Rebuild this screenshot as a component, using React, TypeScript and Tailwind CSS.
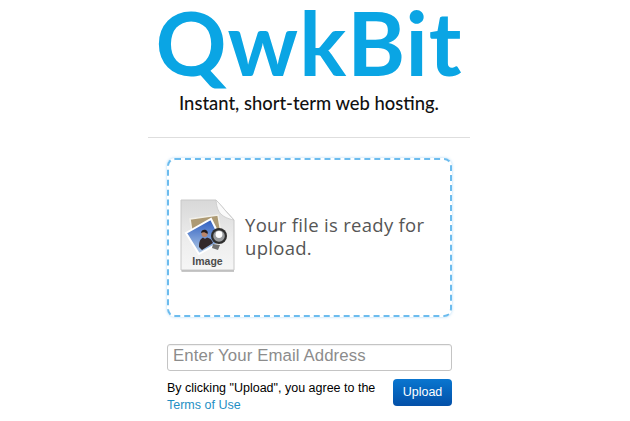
import React from "react";

// Finder-style image document icon
function ImageDocIcon() {
  return (
    <svg width="58" height="76" viewBox="0 0 58 76" className="block -mt-[3px]">
      <defs>
        <linearGradient id="page" x1="0" y1="0" x2="0" y2="1">
          <stop offset="0" stopColor="#d8d8d8" />
          <stop offset="0.6" stopColor="#eeeeee" />
          <stop offset="1" stopColor="#f6f6f6" />
        </linearGradient>
        <linearGradient id="sky" x1="0" y1="0" x2="0" y2="1">
          <stop offset="0" stopColor="#2c5cc0" />
          <stop offset="1" stopColor="#b4cde8" />
        </linearGradient>
      </defs>
      <path d="M2 2 H37 L55 22 V72 H2 Z" fill="url(#page)" stroke="#c8c8c8" strokeWidth="1" />
      <path d="M37 2 C38 12 40 19 55 22 C47 14 43 8 37 2 Z" fill="#fafafa" stroke="#c8c8c8" strokeWidth="0.8" />
      <path d="M2.5 73 H55" stroke="#b4b4b4" strokeWidth="1.5" />
      <path d="M11 21 L39 17 L42 35 L14 40 Z" fill="#ad9a74" stroke="#f2f0ea" strokeWidth="1.5" />
      <path d="M7 35 L32 21 L43 43 L20 56 Z" fill="url(#sky)" stroke="#ffffff" strokeWidth="2" />
      <path d="M20 49 C20 44 21 41 24 39.5 C25 41 27 41 28 39.5 C31 40 33 42 34 45 L23 52 Z" fill="#33282a" />
      <circle cx="25.5" cy="36" r="3" fill="#b98468" />
      <path d="M22 35 C22 32 25 31 27 32 C29 33 29 35 28.5 36 C26 34 24 34 22 35 Z" fill="#221a1a" />
      <path d="M34 46 L41 47 L39 52 L33 50 Z" fill="#707070" />
      <circle cx="40" cy="38" r="8" fill="#2e2e2e" />
      <circle cx="40" cy="38" r="5.8" fill="#9a9da0" />
      <circle cx="40" cy="36.5" r="3.4" fill="#ffffff" />
      <text x="28.5" y="67" textAnchor="middle" fontFamily="'Liberation Sans', Arial, sans-serif" fontWeight="700" fontSize="10.5" fill="#4c4c4c">
        Image
      </text>
    </svg>
  );
}

export default function App() {
  return (
    <div className="w-[630px] h-[421px] overflow-hidden bg-white font-['Liberation_Sans',Arial,sans-serif]">
      <div className="w-[322px] ml-[148px]">
        {/* Logo */}
        <div className="h-[93px] flex justify-center items-start">
          <span className="font-['Lato',sans-serif] font-bold text-[#0aa5e4] text-[88px] leading-[84px] tracking-[1px] whitespace-nowrap">
            QwkBit
          </span>
        </div>
        <p className="h-[44px] text-center font-['Lato',sans-serif] font-medium text-[18.4px] leading-[20px] text-[#111] whitespace-nowrap">
          Instant, short-term web hosting.
        </p>
        <div className="h-px bg-[#dedede]" />

        <div className="mx-[19px] mt-[20px] w-[285px]">
          {/* Upload box */}
          <div className="h-[159px] rounded-[8px] border-2 border-dashed border-[#6cbcee] shadow-[0_0_3px_rgba(120,190,240,0.6)] flex items-center pl-[10px] gap-[8px]">
            <ImageDocIcon />
            <p className="w-[190px] -mt-[3px] font-['Open_Sans',sans-serif] text-[18.5px] leading-[23px] tracking-[0.3px] text-[#565656]">
              Your file is ready for upload.
            </p>
          </div>

          {/* Email */}
          <div className="mt-[27px] h-[27px] rounded-[3px] border border-[#c4c4c4] shadow-[inset_0_1px_1px_rgba(0,0,0,0.06)] flex items-center px-[5px]">
            <span className="text-[16.8px] text-[#8c8c8c] leading-none tracking-[0.1px] -mt-[2px]">Enter Your Email Address</span>
          </div>

          <div className="mt-[8px] flex justify-between items-start">
            <p className="text-[12.5px] leading-[17px] pt-[1px] text-black">
              By clicking "Upload", you agree to the
              <br />
              <a className="text-[#1f8fc4]">Terms of Use</a>
            </p>
            <button className="w-[59px] h-[27px] rounded-[4px] bg-gradient-to-b from-[#0a76d0] to-[#0450a8] text-white text-[12.5px] leading-none">
              Upload
            </button>
          </div>
        </div>
      </div>
    </div>
  );
}
